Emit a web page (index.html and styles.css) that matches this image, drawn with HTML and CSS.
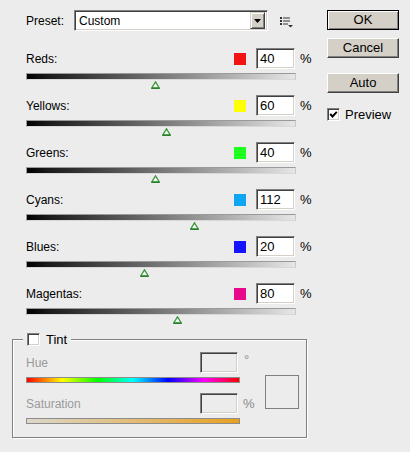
FILE: index.html
```html
<!DOCTYPE html>
<html>
<head>
<meta charset="utf-8">
<link rel="stylesheet" href="styles.css">
</head>
<body>
<div class="dialog">
  <div class="left">
    <div class="preset-row">
      <span class="preset-label">Preset:</span>
      <div class="select">
        <span class="select-value">Custom</span>
        <span class="select-btn"><svg width="7" height="4" viewBox="0 0 7 4"><polygon points="0,0 7,0 3.5,4" fill="#000"/></svg></span>
      </div>
      <svg class="menu-icon" width="13" height="11" viewBox="0 0 13 11">
        <rect x="0" y="0" width="2" height="2" fill="#333"/>
        <rect x="3" y="0.5" width="7" height="1" fill="#333"/>
        <rect x="0" y="3" width="2" height="2" fill="#333"/>
        <rect x="3" y="3.5" width="7" height="1" fill="#333"/>
        <rect x="0" y="6" width="2" height="2" fill="#333"/>
        <rect x="3" y="6.5" width="5" height="1" fill="#333"/>
        <polygon points="8,8 13,8 10.5,10.5" fill="#333"/>
      </svg>
    </div>

    <div class="channels">
      <div class="channel">
        <div class="channel-head"><span class="channel-name">Reds:</span><span class="swatch sw-red"></span><span class="num">40</span><span class="unit">%</span></div>
        <div class="slider"></div>
        <div class="thumb-row"><svg class="thumb" style="margin-left: calc(48% - 4.5px)" width="9" height="8" viewBox="0 0 9 8"><polygon points="4.5,0.8 8.3,7 0.7,7" fill="#f4fbf4" stroke="#3a963a" stroke-width="1.3"/><line x1="0.5" y1="7.3" x2="8.5" y2="7.3" stroke="#257a25" stroke-width="1.2"/></svg></div>
      </div>
      <div class="channel">
        <div class="channel-head"><span class="channel-name">Yellows:</span><span class="swatch sw-yellow"></span><span class="num">60</span><span class="unit">%</span></div>
        <div class="slider"></div>
        <div class="thumb-row"><svg class="thumb" style="margin-left: calc(52% - 4.5px)" width="9" height="8" viewBox="0 0 9 8"><polygon points="4.5,0.8 8.3,7 0.7,7" fill="#f4fbf4" stroke="#3a963a" stroke-width="1.3"/><line x1="0.5" y1="7.3" x2="8.5" y2="7.3" stroke="#257a25" stroke-width="1.2"/></svg></div>
      </div>
      <div class="channel">
        <div class="channel-head"><span class="channel-name">Greens:</span><span class="swatch sw-green"></span><span class="num">40</span><span class="unit">%</span></div>
        <div class="slider"></div>
        <div class="thumb-row"><svg class="thumb" style="margin-left: calc(48% - 4.5px)" width="9" height="8" viewBox="0 0 9 8"><polygon points="4.5,0.8 8.3,7 0.7,7" fill="#f4fbf4" stroke="#3a963a" stroke-width="1.3"/><line x1="0.5" y1="7.3" x2="8.5" y2="7.3" stroke="#257a25" stroke-width="1.2"/></svg></div>
      </div>
      <div class="channel">
        <div class="channel-head"><span class="channel-name">Cyans:</span><span class="swatch sw-cyan"></span><span class="num">112</span><span class="unit">%</span></div>
        <div class="slider"></div>
        <div class="thumb-row"><svg class="thumb" style="margin-left: calc(62.4% - 4.5px)" width="9" height="8" viewBox="0 0 9 8"><polygon points="4.5,0.8 8.3,7 0.7,7" fill="#f4fbf4" stroke="#3a963a" stroke-width="1.3"/><line x1="0.5" y1="7.3" x2="8.5" y2="7.3" stroke="#257a25" stroke-width="1.2"/></svg></div>
      </div>
      <div class="channel">
        <div class="channel-head"><span class="channel-name">Blues:</span><span class="swatch sw-blue"></span><span class="num">20</span><span class="unit">%</span></div>
        <div class="slider"></div>
        <div class="thumb-row"><svg class="thumb" style="margin-left: calc(44% - 4.5px)" width="9" height="8" viewBox="0 0 9 8"><polygon points="4.5,0.8 8.3,7 0.7,7" fill="#f4fbf4" stroke="#3a963a" stroke-width="1.3"/><line x1="0.5" y1="7.3" x2="8.5" y2="7.3" stroke="#257a25" stroke-width="1.2"/></svg></div>
      </div>
      <div class="channel">
        <div class="channel-head"><span class="channel-name">Magentas:</span><span class="swatch sw-magenta"></span><span class="num">80</span><span class="unit">%</span></div>
        <div class="slider"></div>
        <div class="thumb-row"><svg class="thumb" style="margin-left: calc(56% - 4.5px)" width="9" height="8" viewBox="0 0 9 8"><polygon points="4.5,0.8 8.3,7 0.7,7" fill="#f4fbf4" stroke="#3a963a" stroke-width="1.3"/><line x1="0.5" y1="7.3" x2="8.5" y2="7.3" stroke="#257a25" stroke-width="1.2"/></svg></div>
      </div>
    </div>

    <fieldset class="tint">
      <legend class="tint-legend"><span class="checkbox"></span><span class="tint-text">Tint</span></legend>
      <div class="tint-body">
        <div class="tint-controls">
          <div class="tint-row"><span class="tint-label">Hue</span><span class="num disabled"></span><span class="tint-unit deg">°</span></div>
          <div class="bar hue-bar"></div>
          <div class="tint-row sat"><span class="tint-label">Saturation</span><span class="num disabled"></span><span class="tint-unit">%</span></div>
          <div class="bar sat-bar"></div>
        </div>
        <div class="preview-swatch"></div>
      </div>
    </fieldset>
  </div>

  <div class="right">
    <div class="btn default">OK</div>
    <div class="btn cancel">Cancel</div>
    <div class="btn auto">Auto</div>
    <div class="preview-row">
      <span class="checkbox checked"><svg width="9" height="9" viewBox="0 0 9 9"><polyline points="1.2,4 3.5,6.5 7.8,1.8" fill="none" stroke="#000" stroke-width="1.9"/></svg></span>
      <span class="preview-text">Preview</span>
    </div>
  </div>
</div>
</body>
</html>
```

FILE: styles.css
```css
html, body {
  margin: 0;
  padding: 0;
  background: #ececec;
}
body {
  font-family: "Liberation Sans", Arial, sans-serif;
  font-size: 12px;
  color: #000;
}
.dialog {
  display: flex;
  padding: 10px 0 0 12px;
  height: 452px;
  box-sizing: border-box;
}
.left {
  width: 300px;
}
.preset-row {
  display: flex;
  align-items: center;
  height: 21px;
  padding-left: 14px;
}
.preset-label {
  width: 48px;
}
.select {
  width: 194px;
  height: 21px;
  box-sizing: border-box;
  display: flex;
  align-items: center;
  background: #fff;
  border: 1px solid;
  border-color: #808080 #fff #fff #808080;
  box-shadow: inset 1px 1px 0 #404040, inset -1px -1px 0 #d4d0c8;
  padding: 1px 2px 1px 1px;
}
.select-value {
  flex: 1;
  padding-left: 3px;
}
.select-btn {
  width: 15px;
  height: 17px;
  box-sizing: border-box;
  background: #d4d0c8;
  border: 1px solid;
  border-color: #d4d0c8 #404040 #404040 #d4d0c8;
  box-shadow: inset 1px 1px 0 #fff, inset -1px -1px 0 #808080;
  display: flex;
  align-items: center;
  justify-content: center;
}
.menu-icon {
  margin-left: 12px;
  margin-top: 4px;
}
.channels {
  margin-top: 17px;
  padding-left: 14px;
}
.channel {
  width: 288px;
  height: 47px;
}
.channel-head {
  display: flex;
  align-items: center;
  height: 21px;
}
.channel-name {
  flex: 1;
}
.swatch {
  width: 12px;
  height: 12px;
  margin-right: 10px;
  margin-top: 1px;
}
.sw-red { background: #f21414; }
.sw-yellow { background: #ffff00; }
.sw-green { background: #1eff1e; }
.sw-cyan { background: #0ea6f4; }
.sw-blue { background: #1414ff; }
.sw-magenta { background: #e8088c; }
.num {
  width: 39px;
  height: 21px;
  box-sizing: border-box;
  background: #fff;
  border: 1px solid;
  border-color: #808080 #fff #fff #808080;
  box-shadow: inset 1px 1px 0 #404040, inset -1px -1px 0 #d4d0c8;
  padding-left: 3px;
  line-height: 19px;
  font-size: 13px;
}
.unit {
  margin-left: 5px;
  width: 14px;
  font-size: 13px;
}
.slider {
  margin-top: 4px;
  width: 270px;
  height: 7px;
  box-sizing: border-box;
  border: 1px solid #9a9a9a;
  border-bottom-color: #d8d8d8;
  border-right-color: #c8c8c8;
  background: linear-gradient(to right, #000 0%, #1a1a1a 8%, #e6e6e6 100%);
}
.thumb-row {
  width: 270px;
  height: 15px;
  display: flex;
}
.thumb {
  display: block;
  margin-top: 1px;
}
.tint {
  margin: 2px 0 0 0;
  width: 295px;
  box-sizing: border-box;
  border: 1px solid #808080;
  box-shadow: 1px 1px 0 #fff, inset 1px 1px 0 #fff;
  padding: 6px 0 13px 13px;
  min-inline-size: 0;
}
.tint-legend {
  display: flex;
  align-items: center;
  padding: 0 4px;
  margin-left: -3px;
  height: 14px;
  background: #ececec;
}
.checkbox {
  width: 13px;
  height: 13px;
  box-sizing: border-box;
  background: #fff;
  border: 1px solid;
  border-color: #808080 #fff #fff #808080;
  box-shadow: inset 1px 1px 0 #404040, inset -1px -1px 0 #d4d0c8;
  display: flex;
  align-items: center;
  justify-content: center;
}
.tint-text {
  margin-left: 6px;
  font-size: 13px;
}
.tint-body {
  display: flex;
}
.tint-controls {
  width: 239px;
}
.tint-row {
  display: flex;
  align-items: center;
  height: 21px;
}
.tint-row.sat {
  margin-top: 10px;
}
.tint-label {
  width: 174px;
  color: #9a9a9a;
}
.num.disabled {
  width: 38px;
  background: #ececec;
}
.tint-unit {
  margin-left: 5px;
  color: #8a8a8a;
  font-size: 13px;
}
.tint-unit.deg {
  margin-left: 6px;
  align-self: flex-start;
}
.bar {
  width: 214px;
  height: 6px;
  margin-top: 4px;
  box-sizing: border-box;
  border: 1px solid #8c8c8c;
}
.hue-bar {
  background: linear-gradient(to right, #ff0000 0%, #ffff00 16.7%, #00ff00 33.3%, #00ffff 50%, #0000ff 66.7%, #ff00ff 83.3%, #ff0000 100%);
}
.sat-bar {
  background: linear-gradient(to right, #dcd8cc 0%, #e8a020 100%);
}
.preview-swatch {
  width: 34px;
  height: 34px;
  box-sizing: border-box;
  border: 1px solid #808080;
  margin-top: 23px;
}
.right {
  margin-left: 15px;
  width: 72px;
}
.btn {
  width: 72px;
  height: 20px;
  box-sizing: border-box;
  background: #d4d0c8;
  border: 1px solid;
  border-color: #fff #404040 #404040 #fff;
  box-shadow: inset -1px -1px 0 #808080;
  text-align: center;
  line-height: 18px;
  font-size: 13px;
}
.btn.default {
  border-color: #000;
  box-shadow: inset 1px 1px 0 #fff, inset -1px -1px 0 #808080;
}
.btn.cancel {
  margin-top: 8px;
}
.btn.auto {
  margin-top: 15px;
}
.preview-row {
  display: flex;
  align-items: center;
  margin-top: 14px;
}
.preview-text {
  margin-left: 5px;
  font-size: 13px;
}
```
